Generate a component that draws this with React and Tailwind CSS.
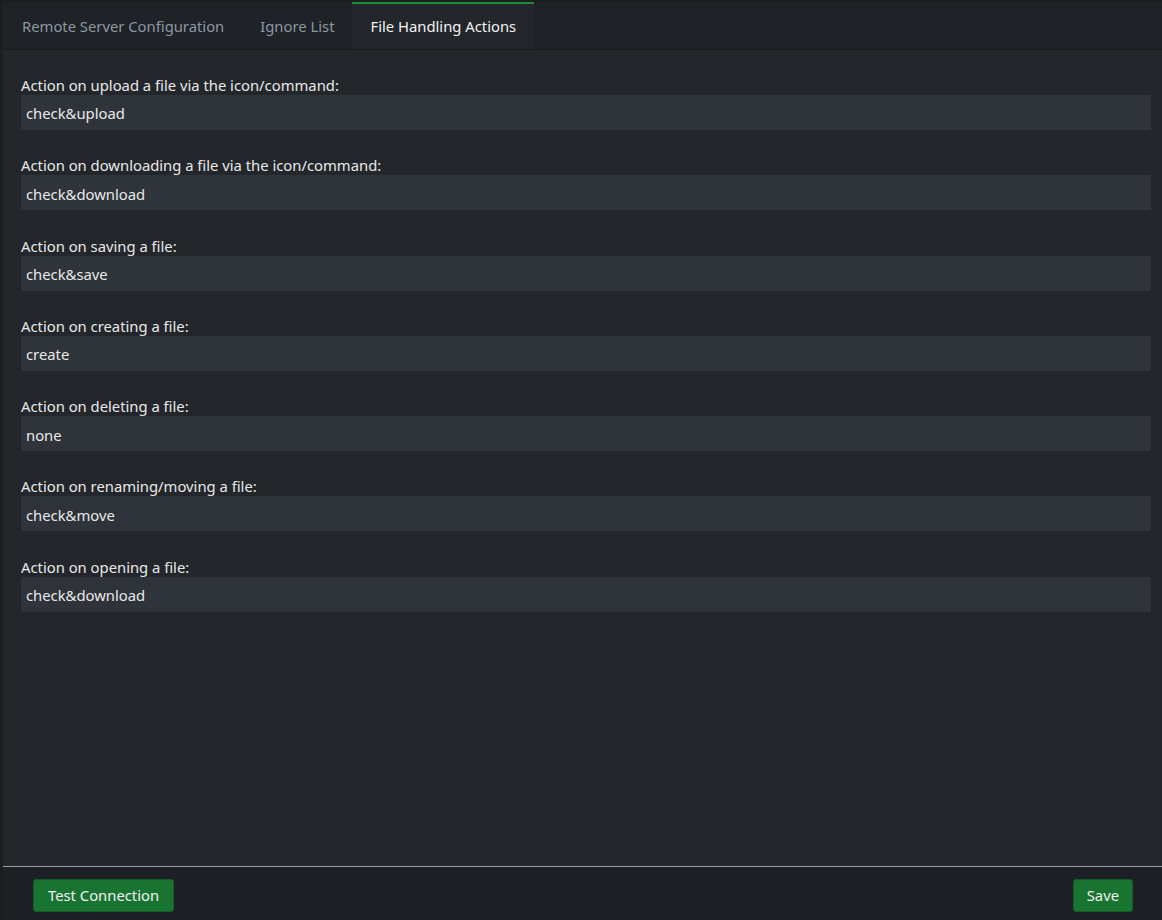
import React from 'react';

const fields = [
  { label: 'Action on upload a file via the icon/command:', value: 'check&upload' },
  { label: 'Action on downloading a file via the icon/command:', value: 'check&download' },
  { label: 'Action on saving a file:', value: 'check&save' },
  { label: 'Action on creating a file:', value: 'create' },
  { label: 'Action on deleting a file:', value: 'none' },
  { label: 'Action on renaming/moving a file:', value: 'check&move' },
  { label: 'Action on opening a file:', value: 'check&download' },
];

const tabs = ['Remote Server Configuration', 'Ignore List', 'File Handling Actions'];

export default function App() {
  return (
    <div
      className="w-[1162px] h-[920px] bg-[#1b1e21] pl-[3px] pt-[2px] flex flex-col text-[14.8px] overflow-hidden"
      style={{ fontFamily: '"Noto Sans", "Open Sans", sans-serif' }}
    >
      <div className="h-[48px] flex items-stretch bg-[#1f2226] border-b border-[#181a1d]">
        {tabs.map((t, i) => {
          const active = i === 2;
          return (
            <div
              key={t}
              className={
                active
                  ? 'px-[18px] flex items-center bg-[#23272b] border-t-2 border-[#1f8a3a] text-[#f2f2f2]'
                  : i === 0
                  ? 'pl-[19px] pr-[18px] flex items-center border-t-2 border-transparent text-[#8e97a2]'
                  : 'px-[18px] flex items-center border-t-2 border-transparent text-[#8e97a2]'
              }
            >
              {t}
            </div>
          );
        })}
        <div className="flex-1" />
      </div>

      <div className="flex-1 bg-[#23272b] pl-[18px] pr-[11px] pt-[26px]">
        {fields.map((f) => (
          <div key={f.label} className="mb-[26.3px] last:mb-0">
            <div className="text-[#e8e8e8] leading-[19px]">{f.label}</div>
            <div className="h-[35px] bg-[#2f343b] flex items-center px-[5px] pt-[2px] text-[#e8e8e8]">
              {f.value}
            </div>
          </div>
        ))}
      </div>

      <div className="h-[54px] bg-[#1c1f23] border-t border-[#9a9fa5] flex items-center justify-between pl-[30px] pr-[29px] pt-[4px]">
        <button className="h-[33px] px-[14px] bg-[#1a7431] border border-[#155d28] rounded-[3px] text-[#f0f0f0]">
          Test Connection
        </button>
        <button className="h-[33px] px-[13px] bg-[#1a7431] border border-[#155d28] rounded-[3px] text-[#f0f0f0]">
          Save
        </button>
      </div>
    </div>
  );
}
